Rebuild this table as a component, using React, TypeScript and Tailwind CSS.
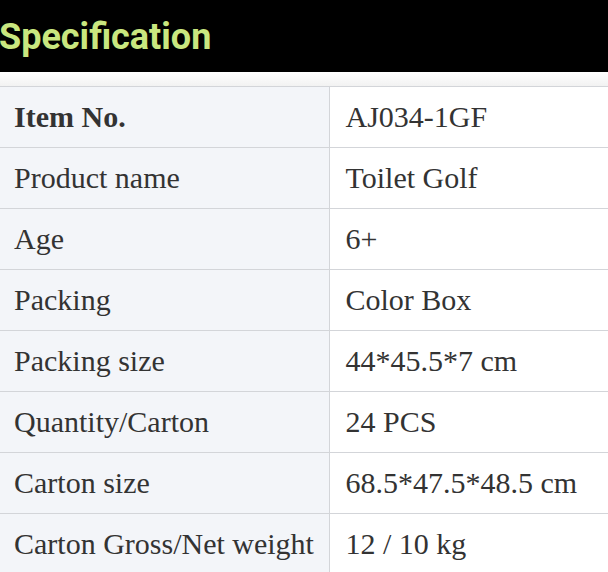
import React from "react";

const rows: [string, string][] = [
  ["Item No.", "AJ034-1GF"],
  ["Product name", "Toilet Golf"],
  ["Age", "6+"],
  ["Packing", "Color Box"],
  ["Packing size", "44*45.5*7 cm"],
  ["Quantity/Carton", "24 PCS"],
  ["Carton size", "68.5*47.5*48.5 cm"],
  ["Carton Gross/Net weight", "12 / 10 kg"],
];

export default function App() {
  return (
    <div className="w-[608px] h-[572px] overflow-hidden bg-white">
      <div className="h-[72px] bg-black flex items-center">
        <h2 className="text-[36px] font-bold text-[#c9e77f] leading-none [font-family:Roboto,sans-serif] -ml-[1px] pt-[2px]">
          Specification
        </h2>
      </div>
      <div className="h-[14px] bg-gradient-to-b from-white to-[#f2f2f2]" />
      <table className="w-full border-collapse [font-family:'Liberation_Serif',serif] text-[30px] text-[#333]">
        <tbody>
          {rows.map(([k, v], i) => (
            <tr key={k} className="h-[61px]">
              <td
                className={`w-[329px] bg-[#f3f5f9] border-t border-r border-[#d3d5d9] pl-[14px] pr-0 pb-[2px] whitespace-nowrap align-middle ${
                  i === 0 ? "font-bold" : ""
                }`}
              >
                {k}
              </td>
              <td className="border-t border-[#d3d5d9] pl-[16px] pb-[2px] align-middle bg-white whitespace-nowrap">{v}</td>
            </tr>
          ))}
        </tbody>
      </table>
    </div>
  );
}
